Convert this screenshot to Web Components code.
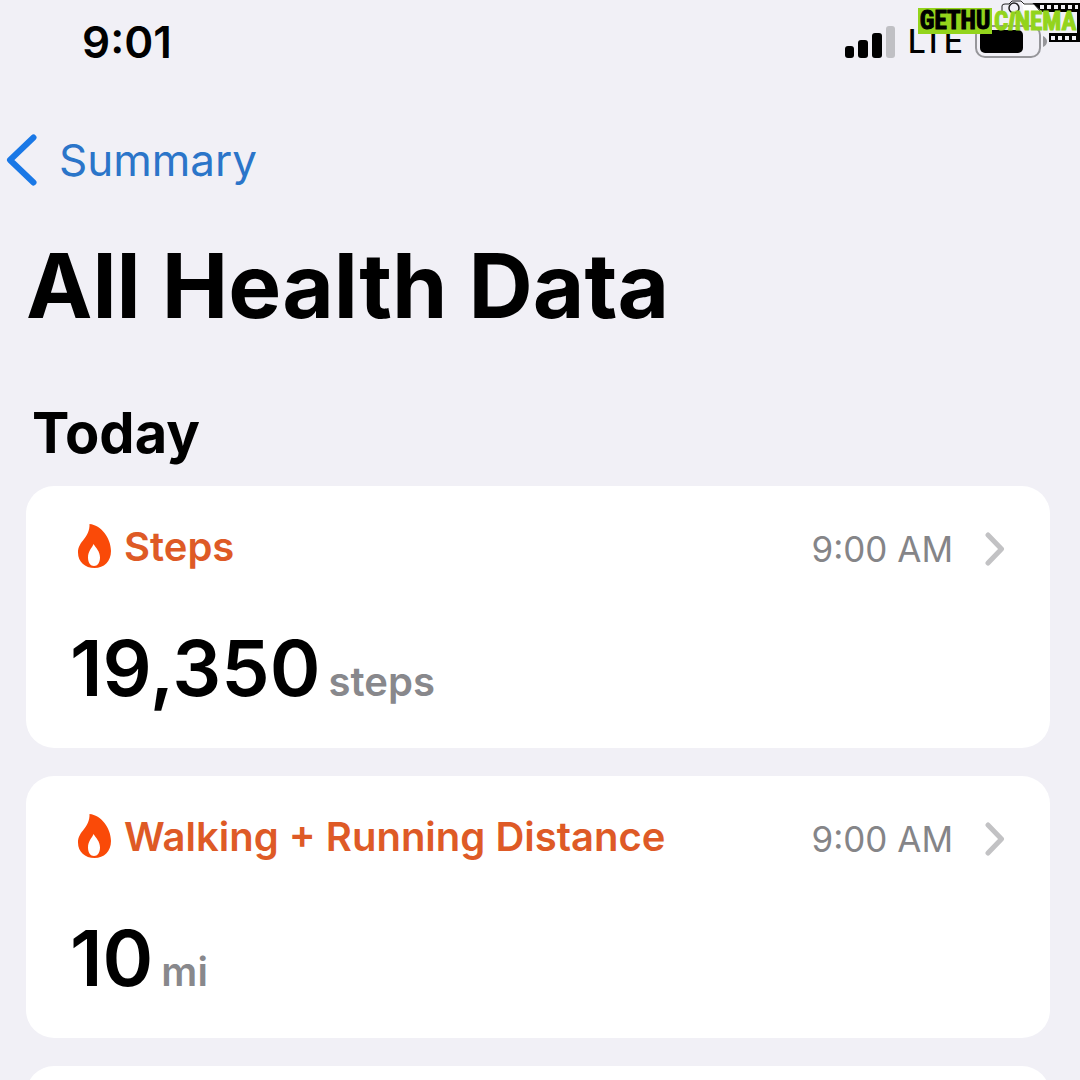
<!DOCTYPE html>
<html lang="en">
<head>
<meta charset="utf-8">
<meta name="viewport" content="width=device-width, initial-scale=1">
<title>All Health Data</title>
<style>
  html { background: #f1f0f6; }
  body { margin: 0; font-family: Inter, "Liberation Sans", sans-serif; color: #000; }
</style>
</head>
<body>
<health-page>
  <status-bar slot="status" time="9:01" network="LTE"></status-bar>
  <back-link slot="nav" href="#summary">Summary</back-link>
  <span slot="title">All Health Data</span>
  <span slot="section">Today</span>
  <metric-card label="Steps" time="9:00 AM" value="19,350" unit="steps"></metric-card>
  <metric-card label="Walking + Running Distance" time="9:00 AM" value="10" unit="mi"></metric-card>
  <metric-card></metric-card>
</health-page>
<site-mark></site-mark>

<script>
class HealthPage extends HTMLElement {
  constructor() {
    super();
    this.attachShadow({ mode: 'open' }).innerHTML = `
      <style>
        :host { display: flex; flex-direction: column; height: 100vh; overflow-x: hidden; overflow-y: auto; scrollbar-width: none; }
        nav, main { flex: none; }
        h1, h2 { margin: 0; }
        h1 { padding: 0 26px; font-size: 89px; line-height: 100px; font-weight: 700; }
        h2 { padding: 0 32px; margin: 62px 0 18px; font-size: 56px; line-height: 70px; font-weight: 700; }
        section { display: flex; flex-direction: column; gap: 28px; padding: 0 30px 28px 26px; }
      </style>
      <slot name="status"></slot>
      <nav><slot name="nav"></slot></nav>
      <main>
        <h1><slot name="title"></slot></h1>
        <h2><slot name="section"></slot></h2>
        <section><slot></slot></section>
      </main>`;
  }
}

class StatusBar extends HTMLElement {
  constructor() {
    super();
    this.attachShadow({ mode: 'open' }).innerHTML = `
      <style>
        :host { display: flex; flex: none; justify-content: space-between; align-items: center; height: 84px; padding: 0 32px 0 82px; }
        .time { font-size: 44px; line-height: 52px; font-weight: 600; }
        .right { display: flex; align-items: center; gap: 12px; }
        .net { font-size: 32px; line-height: 44px; font-weight: 500; }
        svg { display: block; }
      </style>
      <span class="time"></span>
      <span class="right">
        <svg width="51" height="34" viewBox="0 0 51 34" aria-hidden="true">
          <rect x="0" y="21" width="9" height="12" rx="3"/><rect x="13" y="15" width="10" height="18" rx="3"/>
          <rect x="27" y="8" width="10" height="25" rx="3"/><rect x="41" y="1" width="9" height="32" rx="3" fill="#c0c0c4"/>
        </svg>
        <span class="net"></span>
        <svg width="73" height="34" viewBox="0 0 73 34" aria-hidden="true">
          <rect x="1" y="1" width="64" height="31" rx="9" fill="none" stroke="#96969a" stroke-width="2"/>
          <rect x="5" y="5" width="43" height="23" rx="5"/>
          <path d="M68 11q4 2 4 5.500t-4 5.500z" fill="#96969a"/>
        </svg>
      </span>`;
  }
  connectedCallback() {
    this.shadowRoot.querySelector('.time').textContent = this.getAttribute('time');
    this.shadowRoot.querySelector('.net').textContent = this.getAttribute('network');
  }
}

class BackLink extends HTMLElement {
  constructor() {
    super();
    this.attachShadow({ mode: 'open' }).innerHTML = `
      <style>
        :host { display: flex; align-items: center; height: 152px; padding-left: 6px; }
        a { display: flex; align-items: center; gap: 22px; color: #2b75c9; text-decoration: none; font-size: 44px; line-height: 56px; }
        svg { display: block; }
      </style>
      <a><svg width="31" height="52" viewBox="0 0 31 52" aria-hidden="true"><path d="M27.500 3.500L4 26l23.500 22.500" fill="none" stroke="#1a78e6" stroke-width="6" stroke-linecap="round" stroke-linejoin="round"/></svg><slot></slot></a>`;
  }
  connectedCallback() {
    this.shadowRoot.querySelector('a').href = this.getAttribute('href');
  }
}

class MetricCard extends HTMLElement {
  constructor() {
    super();
    this.attachShadow({ mode: 'open' });
  }
  connectedCallback() {
    const a = n => this.getAttribute(n);
    this.shadowRoot.innerHTML = `
      <style>
        :host { display: block; box-sizing: border-box; min-height: 262px; padding: 32px 45px 22px 44px; border-radius: 28px; background: #fff; }
        header { display: flex; align-items: center; gap: 12px; padding-left: 8px; }
        h3 { flex: 1; margin: 0; font-size: 40px; line-height: 58px; font-weight: 600; color: #de5a26; }
        time { margin-right: 20px; padding-top: 4px; font-size: 35px; line-height: 52px; color: #858588; }
        svg { display: block; flex: none; }
        .flame { margin-bottom: 2px; }
        .chev { margin-top: 4px; }
        p { display: flex; align-items: baseline; gap: 8px; height: 92px; margin: 46px 0 0; line-height: 92px; }
        .value { font-size: 77px; font-weight: 600; }
        .unit { font-size: 40px; font-weight: 600; color: #88888c; }
      </style>` + (a('label') ? `
      <header>
        <svg class="flame" width="34" height="44" viewBox="0 0 34 44" aria-hidden="true"><path fill-rule="evenodd" fill="#fa4a08" d="M11.500 0C23 1 33 14 33 27C33 37.500 26 44 16.500 44C7 44 0 38 0 28.500C0 17 12 14 11.500 0ZM15.500 20C14 24 10 27 10 33.500C10 38.500 12.500 42 16 42C19.500 42 22 38.500 22 33.500C22 27 17.500 23.500 15.500 20Z"/></svg>
        <h3>${a('label')}</h3>
        <time>${a('time')}</time>
        <svg class="chev" width="20" height="34" viewBox="0 0 20 34" aria-hidden="true"><path d="M3 3l13.500 14L3 31" fill="none" stroke="#c2c2c4" stroke-width="5" stroke-linecap="round" stroke-linejoin="round"/></svg>
      </header>
      <p><span class="value">${a('value')}</span><span class="unit">${a('unit')}</span></p>` : '');
  }
}

class SiteMark extends HTMLElement {
  constructor() {
    super();
    this.attachShadow({ mode: 'open' }).innerHTML = `
      <style>
        :host { position: absolute; top: 0; right: 0; width: 162px; height: 44px; display: block; }
        svg { display: block; position: absolute; top: 0; right: 0; }
        .words { position: relative; display: flex; padding-top: 8px; font: 700 25px/25px "Liberation Sans Narrow", "Roboto Condensed", "Liberation Sans", sans-serif; -webkit-text-stroke: 1px; }
        .a { width: 74px; background: #93d41c; text-align: center; }
        .b { padding: 1px 0 0 2px; color: #93d41c; }
        i { font-style: italic; }
      </style>
      <svg width="80" height="44" viewBox="0 0 80 44" aria-hidden="true">
        <path d="M32 3h48v39H49v-9h28V12H42z"/>
        <path d="M42 12h35v21H49l-7-8z" fill="#f1f0f6"/>
        <path d="M40 7h38M51 38h27" stroke="#f1f0f6" stroke-width="4" stroke-dasharray="4 3"/>
        <path d="M22 3h10l10 9h-18z" fill="#fff"/>
        <path d="M2 11V6q0-2 3-2h4l3-3h9l3 3h10l6 7" fill="none" stroke="#222"/>
        <circle cx="14" cy="8" r="5" fill="#f1f0f6" stroke="#222" stroke-width="1.500"/>
      </svg>
      <div class="words"><span class="a">GETHU</span><span class="b">C<i>I</i>NEMA</span></div>`;
  }
}

customElements.define('health-page', HealthPage);
customElements.define('status-bar', StatusBar);
customElements.define('back-link', BackLink);
customElements.define('metric-card', MetricCard);
customElements.define('site-mark', SiteMark);
</script>
</body>
</html>
